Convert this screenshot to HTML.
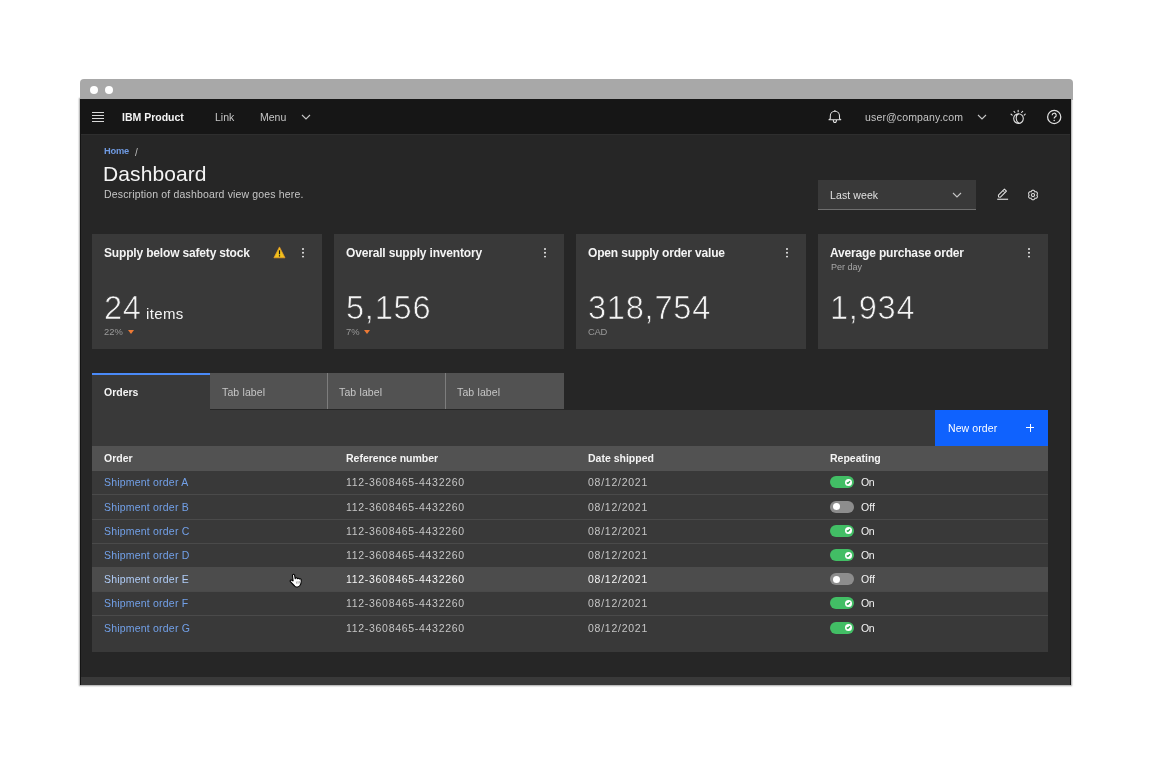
<!DOCTYPE html>
<html><head><meta charset="utf-8"><style>
html,body{margin:0;padding:0;background:#fff;}
body{width:1152px;height:767px;position:relative;overflow:hidden;font-family:"Liberation Sans",sans-serif;}
.t{position:absolute;white-space:nowrap;line-height:1;will-change:transform;}
.r{position:absolute;}
svg.r{overflow:visible;}
</style></head><body>
<div class="r" style="left:80px;top:99px;width:991px;height:586px;background:#141414;box-shadow:0 0 1.5px 0.6px rgba(0,0,0,.35);"></div>
<div class="r" style="left:79.5px;top:79px;width:993px;height:21px;background:#a8a8a8;border-radius:4px 4px 0 0;"></div>
<div class="r" style="left:90.2px;top:86px;width:8px;height:8px;background:#fff;border-radius:50%;"></div>
<div class="r" style="left:105.2px;top:86px;width:8px;height:8px;background:#fff;border-radius:50%;"></div>
<div class="r" style="left:80px;top:99px;width:991px;height:586px;background:#141414;"></div>
<div class="r" style="left:81px;top:99px;width:989px;height:585px;background:#262626;"></div>
<div class="r" style="left:81px;top:677px;width:989px;height:7.5px;background:#393939;"></div>
<div class="r" style="left:81px;top:99px;width:989px;height:35px;background:#161616;"></div>
<div class="r" style="left:81px;top:134px;width:989px;height:1px;background:#2e2e2e;"></div>
<div class="r" style="left:92px;top:112.3px;width:11.5px;height:1.0px;background:#d8d8d8;"></div>
<div class="r" style="left:92px;top:115.3px;width:11.5px;height:1.0px;background:#d8d8d8;"></div>
<div class="r" style="left:92px;top:118.3px;width:11.5px;height:1.0px;background:#d8d8d8;"></div>
<div class="r" style="left:92px;top:121.3px;width:11.5px;height:1.0px;background:#d8d8d8;"></div>
<div class="t" style="left:121.80px;top:112.11px;font-size:10.5px;color:#f4f4f4;font-weight:700;letter-spacing:0px;">IBM Product</div>
<div class="t" style="left:215.00px;top:112.11px;font-size:10.5px;color:#c6c6c6;font-weight:400;letter-spacing:0px;">Link</div>
<div class="t" style="left:260.30px;top:112.11px;font-size:10.5px;color:#c6c6c6;font-weight:400;letter-spacing:0px;">Menu</div>
<svg class="r" style="left:300.6px;top:114px" width="10" height="6.0" viewBox="-1 -1 10 6.0"><polyline points="0,0 4.0,4.0 8,0" fill="none" stroke="#c6c6c6" stroke-width="1.1"/></svg>
<svg class="r" style="left:826px;top:108px" width="18" height="18" viewBox="0 0 18 18">
<g fill="none" stroke="#e0e0e0" stroke-width="1.05" stroke-linejoin="round">
<path d="M8.9 1.9 V3.2"/>
<path d="M4.3 10.6 V7.9 A4.6 4.6 0 0 1 13.5 7.9 V10.6 L14.8 11.7 H3 Z"/>
<path d="M7.3 11.9 A1.6 2.6 0 0 0 10.5 11.9"/>
</g></svg>
<div class="t" style="left:865.10px;top:111.71px;font-size:10.5px;color:#c6c6c6;font-weight:400;letter-spacing:0.15px;">user@company.com</div>
<svg class="r" style="left:977px;top:114px" width="10" height="6.0" viewBox="-1 -1 10 6.0"><polyline points="0,0 4.0,4.0 8,0" fill="none" stroke="#c6c6c6" stroke-width="1.1"/></svg>
<svg class="r" style="left:1005px;top:105px" width="25" height="25" viewBox="0 0 25 25">
<g stroke="#e0e0e0" stroke-width="1.1" fill="none" stroke-linecap="round">
<path d="M6.1 9.2 L7.2 10.1 M9.0 6.4 L9.9 7.5 M13.15 5.2 V6.8 M17.6 6.4 L16.6 7.5 M20.2 9.2 L19.2 10.1"/>
<circle cx="13.5" cy="13.6" r="4.8"/>
<path d="M13.4 8.9 C10.4 9.9 10.4 16.4 13.8 18.3"/>
</g></svg>
<svg class="r" style="left:1046px;top:109px" width="16" height="16" viewBox="0 0 16 16">
<circle cx="8.2" cy="8" r="6.6" fill="none" stroke="#e0e0e0" stroke-width="1.25"/>
<path d="M6.2 6.3 A2 2 0 1 1 8.9 8.1 C8.3 8.4 8.2 8.8 8.2 9.6" fill="none" stroke="#e0e0e0" stroke-width="1.2"/>
<circle cx="8.2" cy="11.4" r="0.75" fill="#e0e0e0"/>
</svg>
<div class="t" style="left:103.60px;top:147.03px;font-size:9.3px;color:#6f9ae2;font-weight:700;letter-spacing:-0.25px;">Home</div>
<div class="t" style="left:135.30px;top:147.53px;font-size:10px;color:#bdbdbd;font-weight:400;letter-spacing:0px;">/</div>
<div class="t" style="left:103.30px;top:163.22px;font-size:21px;color:#f4f4f4;font-weight:400;letter-spacing:0.1px;">Dashboard</div>
<div class="t" style="left:104.00px;top:189.31px;font-size:10.5px;color:#c6c6c6;font-weight:400;letter-spacing:0.16px;">Description of dashboard view goes here.</div>
<div class="r" style="left:818px;top:180px;width:157.5px;height:29px;background:#393939;border-bottom:1px solid #6f6f6f;"></div>
<div class="t" style="left:830.40px;top:190.31px;font-size:10.5px;color:#e0e0e0;font-weight:400;letter-spacing:0.1px;">Last week</div>
<svg class="r" style="left:952.3px;top:191.7px" width="10" height="6.0" viewBox="-1 -1 10 6.0"><polyline points="0,0 4.0,4.0 8,0" fill="none" stroke="#c6c6c6" stroke-width="1.1"/></svg>
<svg class="r" style="left:990px;top:183px" width="22" height="22" viewBox="0 0 22 22">
<g fill="none" stroke="#e0e0e0" stroke-width="1.05" stroke-linejoin="round">
<g transform="translate(12.4,10.2) rotate(-45)"><path d="M-4.2 -1.45 H4.3 V1.45 H-4.2 L-5.4 0 Z"/><path d="M2.2 -1.4 V1.4" stroke-width="0.8"/></g>
<path d="M7.2 16.3 H18.1" stroke-width="1.3" stroke="#c6c6c6"/>
</g></svg>
<svg class="r" style="left:1023px;top:184.7px" width="20" height="20" viewBox="0 0 20 20">
<g fill="none" stroke="#e0e0e0" stroke-width="1.05">
<path d="M10.00 14.80 L9.83 14.79 L9.67 14.77 L9.50 14.73 L9.34 14.67 L9.19 14.60 L9.04 14.52 L8.90 14.42 L8.76 14.31 L8.64 14.19 L8.52 14.05 L8.42 13.91 L8.33 13.76 L8.24 13.60 L8.17 13.43 L8.12 13.25 L7.94 13.30 L7.76 13.32 L7.58 13.33 L7.40 13.32 L7.23 13.30 L7.06 13.27 L6.89 13.22 L6.72 13.16 L6.57 13.09 L6.42 13.00 L6.28 12.90 L6.15 12.79 L6.04 12.67 L5.93 12.54 L5.84 12.40 L5.77 12.25 L5.70 12.10 L5.66 11.93 L5.63 11.77 L5.61 11.60 L5.61 11.43 L5.62 11.26 L5.65 11.08 L5.70 10.91 L5.75 10.75 L5.82 10.59 L5.91 10.43 L6.00 10.28 L6.11 10.14 L6.25 10.00 L6.11 9.86 L6.00 9.72 L5.91 9.57 L5.82 9.41 L5.75 9.25 L5.70 9.09 L5.65 8.92 L5.62 8.74 L5.61 8.57 L5.61 8.40 L5.63 8.23 L5.66 8.07 L5.70 7.90 L5.77 7.75 L5.84 7.60 L5.93 7.46 L6.04 7.33 L6.15 7.21 L6.28 7.10 L6.42 7.00 L6.57 6.91 L6.72 6.84 L6.89 6.78 L7.06 6.73 L7.23 6.70 L7.40 6.68 L7.58 6.67 L7.76 6.68 L7.94 6.70 L8.12 6.75 L8.17 6.57 L8.24 6.40 L8.33 6.24 L8.42 6.09 L8.52 5.95 L8.64 5.81 L8.76 5.69 L8.90 5.58 L9.04 5.48 L9.19 5.40 L9.34 5.33 L9.50 5.27 L9.67 5.23 L9.83 5.21 L10.00 5.20 L10.17 5.21 L10.33 5.23 L10.50 5.27 L10.66 5.33 L10.81 5.40 L10.96 5.48 L11.10 5.58 L11.24 5.69 L11.36 5.81 L11.48 5.95 L11.58 6.09 L11.67 6.24 L11.76 6.40 L11.83 6.57 L11.88 6.75 L12.06 6.70 L12.24 6.68 L12.42 6.67 L12.60 6.68 L12.77 6.70 L12.94 6.73 L13.11 6.78 L13.28 6.84 L13.43 6.91 L13.58 7.00 L13.72 7.10 L13.85 7.21 L13.96 7.33 L14.07 7.46 L14.16 7.60 L14.23 7.75 L14.30 7.90 L14.34 8.07 L14.37 8.23 L14.39 8.40 L14.39 8.57 L14.38 8.74 L14.35 8.92 L14.30 9.09 L14.25 9.25 L14.18 9.41 L14.09 9.57 L14.00 9.72 L13.89 9.86 L13.75 10.00 L13.89 10.14 L14.00 10.28 L14.09 10.43 L14.18 10.59 L14.25 10.75 L14.30 10.91 L14.35 11.08 L14.38 11.26 L14.39 11.43 L14.39 11.60 L14.37 11.77 L14.34 11.93 L14.30 12.10 L14.23 12.25 L14.16 12.40 L14.07 12.54 L13.96 12.67 L13.85 12.79 L13.72 12.90 L13.58 13.00 L13.43 13.09 L13.28 13.16 L13.11 13.22 L12.94 13.27 L12.77 13.30 L12.60 13.32 L12.42 13.33 L12.24 13.32 L12.06 13.30 L11.88 13.25 L11.83 13.43 L11.76 13.60 L11.67 13.76 L11.58 13.91 L11.48 14.05 L11.36 14.19 L11.24 14.31 L11.10 14.42 L10.96 14.52 L10.81 14.60 L10.66 14.67 L10.50 14.73 L10.33 14.77 L10.17 14.79 L10.00 14.80 Z"/>
<circle cx="10" cy="10" r="1.6"/>
</g></svg>
<div class="r" style="left:92px;top:234px;width:230px;height:115px;background:#393939;"></div>
<div class="t" style="left:104.20px;top:247.04px;font-size:12px;color:#f4f4f4;font-weight:700;letter-spacing:-0.17px;">Supply below safety stock</div>
<svg class="r" style="left:300.1px;top:245.7px" width="6" height="14" viewBox="0 0 6 14"><circle cx="3" cy="3" r="0.95" fill="#f4f4f4"/><circle cx="3" cy="6.8" r="0.95" fill="#f4f4f4"/><circle cx="3" cy="10.6" r="0.95" fill="#f4f4f4"/></svg>
<div class="t" style="left:104.30px;top:291.50px;font-size:32.6px;color:#f4f4f4;font-weight:300;letter-spacing:0.75px;-webkit-text-stroke:0.7px #393939;">24</div>
<div class="t" style="left:104.00px;top:327.34px;font-size:9.4px;color:#9a9a9a;font-weight:400;letter-spacing:0px;">22%</div>
<svg class="r" style="left:127.7px;top:329.5px" width="6" height="4" viewBox="0 0 6 4"><path d="M0 0 H6 L3 4 Z" fill="#ee7a35"/></svg>
<div class="r" style="left:334px;top:234px;width:230px;height:115px;background:#393939;"></div>
<div class="t" style="left:346.20px;top:247.04px;font-size:12px;color:#f4f4f4;font-weight:700;letter-spacing:-0.17px;">Overall supply inventory</div>
<svg class="r" style="left:542.1px;top:245.7px" width="6" height="14" viewBox="0 0 6 14"><circle cx="3" cy="3" r="0.95" fill="#f4f4f4"/><circle cx="3" cy="6.8" r="0.95" fill="#f4f4f4"/><circle cx="3" cy="10.6" r="0.95" fill="#f4f4f4"/></svg>
<div class="t" style="left:346.30px;top:291.50px;font-size:32.6px;color:#f4f4f4;font-weight:300;letter-spacing:0.75px;-webkit-text-stroke:0.7px #393939;">5,156</div>
<div class="t" style="left:346.00px;top:327.34px;font-size:9.4px;color:#9a9a9a;font-weight:400;letter-spacing:0px;">7%</div>
<svg class="r" style="left:364.3px;top:329.5px" width="6" height="4" viewBox="0 0 6 4"><path d="M0 0 H6 L3 4 Z" fill="#ee7a35"/></svg>
<div class="r" style="left:576px;top:234px;width:230px;height:115px;background:#393939;"></div>
<div class="t" style="left:588.20px;top:247.04px;font-size:12px;color:#f4f4f4;font-weight:700;letter-spacing:-0.17px;">Open supply order value</div>
<svg class="r" style="left:784.1px;top:245.7px" width="6" height="14" viewBox="0 0 6 14"><circle cx="3" cy="3" r="0.95" fill="#f4f4f4"/><circle cx="3" cy="6.8" r="0.95" fill="#f4f4f4"/><circle cx="3" cy="10.6" r="0.95" fill="#f4f4f4"/></svg>
<div class="t" style="left:588.30px;top:291.50px;font-size:32.6px;color:#f4f4f4;font-weight:300;letter-spacing:0.75px;-webkit-text-stroke:0.7px #393939;">318,754</div>
<div class="t" style="left:588.00px;top:327.34px;font-size:9.4px;color:#9a9a9a;font-weight:400;letter-spacing:-0.3px;">CAD</div>
<div class="r" style="left:818px;top:234px;width:230px;height:115px;background:#393939;"></div>
<div class="t" style="left:830.20px;top:247.04px;font-size:12px;color:#f4f4f4;font-weight:700;letter-spacing:-0.17px;">Average purchase order</div>
<svg class="r" style="left:1026.1px;top:245.7px" width="6" height="14" viewBox="0 0 6 14"><circle cx="3" cy="3" r="0.95" fill="#f4f4f4"/><circle cx="3" cy="6.8" r="0.95" fill="#f4f4f4"/><circle cx="3" cy="10.6" r="0.95" fill="#f4f4f4"/></svg>
<div class="t" style="left:830.30px;top:291.50px;font-size:32.6px;color:#f4f4f4;font-weight:300;letter-spacing:0.75px;-webkit-text-stroke:0.7px #393939;">1,934</div>
<div class="t" style="left:145.60px;top:306.10px;font-size:15px;color:#f4f4f4;font-weight:400;letter-spacing:0.35px;">items</div>
<div class="t" style="left:830.70px;top:262.98px;font-size:9px;color:#a8a8a8;font-weight:400;letter-spacing:0px;">Per day</div>
<svg class="r" style="left:273px;top:246px" width="13" height="13" viewBox="0 0 13 13">
<path d="M6.45 0.9 L12 11.8 H0.9 Z" fill="#f1c21b" stroke="#ec9a2a" stroke-width="0.7" stroke-linejoin="round"/>
<rect x="5.9" y="4.3" width="1.2" height="4" fill="#161616"/>
<rect x="5.9" y="9.2" width="1.2" height="1.3" fill="#161616"/>
</svg>
<div class="r" style="left:92px;top:373.3px;width:118px;height:37px;background:#393939;"></div>
<div class="r" style="left:92px;top:373.3px;width:118px;height:1.8px;background:#4a8af8;"></div>
<div class="t" style="left:104.10px;top:386.91px;font-size:10.5px;color:#f4f4f4;font-weight:700;letter-spacing:0px;">Orders</div>
<div class="r" style="left:210px;top:373.3px;width:117px;height:36.2px;background:#525252;"></div>
<div class="t" style="left:222.40px;top:386.91px;font-size:10.5px;color:#c6c6c6;font-weight:400;letter-spacing:0.14px;">Tab label</div>
<div class="r" style="left:327px;top:373.3px;width:118px;height:36.2px;background:#525252;"></div>
<div class="r" style="left:327px;top:373.3px;width:1px;height:36.2px;background:#7d7d7d;"></div>
<div class="t" style="left:339.40px;top:386.91px;font-size:10.5px;color:#c6c6c6;font-weight:400;letter-spacing:0.14px;">Tab label</div>
<div class="r" style="left:445px;top:373.3px;width:119px;height:36.2px;background:#525252;"></div>
<div class="r" style="left:445px;top:373.3px;width:1px;height:36.2px;background:#7d7d7d;"></div>
<div class="t" style="left:457.40px;top:386.91px;font-size:10.5px;color:#c6c6c6;font-weight:400;letter-spacing:0.14px;">Tab label</div>
<div class="r" style="left:92px;top:409.5px;width:956px;height:242.5px;background:#393939;"></div>
<div class="r" style="left:935.3px;top:409.5px;width:112.7px;height:36.5px;background:#0f62fe;"></div>
<div class="t" style="left:947.80px;top:423.11px;font-size:10.5px;color:#ffffff;font-weight:400;letter-spacing:0.1px;">New order</div>
<div class="r" style="left:1026.2px;top:427.3px;width:7.5px;height:0.95px;background:#fff;"></div>
<div class="r" style="left:1029.5px;top:424px;width:0.95px;height:7.5px;background:#fff;"></div>
<div class="r" style="left:92px;top:446px;width:956px;height:24.8px;background:#525252;"></div>
<div class="t" style="left:103.80px;top:452.91px;font-size:10.5px;color:#f4f4f4;font-weight:700;letter-spacing:0px;">Order</div>
<div class="t" style="left:345.80px;top:452.91px;font-size:10.5px;color:#f4f4f4;font-weight:700;letter-spacing:0px;">Reference number</div>
<div class="t" style="left:587.80px;top:452.91px;font-size:10.5px;color:#f4f4f4;font-weight:700;letter-spacing:0px;">Date shipped</div>
<div class="t" style="left:829.80px;top:452.91px;font-size:10.5px;color:#f4f4f4;font-weight:700;letter-spacing:0px;">Repeating</div>
<div class="r" style="left:92px;top:494.40000000000003px;width:956px;height:1px;background:#4a4a4a;"></div>
<div class="t" style="left:103.90px;top:477.41px;font-size:10.5px;color:#72a0e8;font-weight:400;letter-spacing:0.2px;">Shipment order A</div>
<div class="t" style="left:346.00px;top:477.41px;font-size:10.5px;color:#c6c6c6;font-weight:400;letter-spacing:0.7px;">112-3608465-4432260</div>
<div class="t" style="left:588.00px;top:477.41px;font-size:10.5px;color:#c6c6c6;font-weight:400;letter-spacing:0.75px;">08/12/2021</div>
<div class="r" style="left:830px;top:476.3px;width:24.2px;height:12px;background:#42be65;border-radius:6px;"></div>
<div class="r" style="left:845px;top:478.90000000000003px;width:7px;height:7px;background:#fff;border-radius:50%;"></div>
<svg class="r" style="left:846px;top:479.90000000000003px" width="5" height="5" viewBox="0 0 5 5"><path d="M0.8 2.4 L1.9 3.4 L4 1.2" fill="none" stroke="#24a148" stroke-width="1.3"/></svg>
<div class="t" style="left:861.00px;top:477.41px;font-size:10.5px;color:#f4f4f4;font-weight:400;letter-spacing:-0.4px;">On</div>
<div class="r" style="left:92px;top:518.6px;width:956px;height:1px;background:#4a4a4a;"></div>
<div class="t" style="left:103.90px;top:501.61px;font-size:10.5px;color:#72a0e8;font-weight:400;letter-spacing:0.2px;">Shipment order B</div>
<div class="t" style="left:346.00px;top:501.61px;font-size:10.5px;color:#c6c6c6;font-weight:400;letter-spacing:0.7px;">112-3608465-4432260</div>
<div class="t" style="left:588.00px;top:501.61px;font-size:10.5px;color:#c6c6c6;font-weight:400;letter-spacing:0.75px;">08/12/2021</div>
<div class="r" style="left:830px;top:500.5px;width:24.2px;height:12px;background:#8d8d8d;border-radius:6px;"></div>
<div class="r" style="left:832.8px;top:503.1px;width:7px;height:7px;background:#fff;border-radius:50%;"></div>
<div class="t" style="left:861.00px;top:501.61px;font-size:10.5px;color:#f4f4f4;font-weight:400;letter-spacing:0px;">Off</div>
<div class="r" style="left:92px;top:542.8000000000001px;width:956px;height:1px;background:#4a4a4a;"></div>
<div class="t" style="left:103.90px;top:525.81px;font-size:10.5px;color:#72a0e8;font-weight:400;letter-spacing:0.2px;">Shipment order C</div>
<div class="t" style="left:346.00px;top:525.81px;font-size:10.5px;color:#c6c6c6;font-weight:400;letter-spacing:0.7px;">112-3608465-4432260</div>
<div class="t" style="left:588.00px;top:525.81px;font-size:10.5px;color:#c6c6c6;font-weight:400;letter-spacing:0.75px;">08/12/2021</div>
<div class="r" style="left:830px;top:524.7px;width:24.2px;height:12px;background:#42be65;border-radius:6px;"></div>
<div class="r" style="left:845px;top:527.3000000000001px;width:7px;height:7px;background:#fff;border-radius:50%;"></div>
<svg class="r" style="left:846px;top:528.3000000000001px" width="5" height="5" viewBox="0 0 5 5"><path d="M0.8 2.4 L1.9 3.4 L4 1.2" fill="none" stroke="#24a148" stroke-width="1.3"/></svg>
<div class="t" style="left:861.00px;top:525.81px;font-size:10.5px;color:#f4f4f4;font-weight:400;letter-spacing:-0.4px;">On</div>
<div class="r" style="left:92px;top:567.0px;width:956px;height:1px;background:#4a4a4a;"></div>
<div class="t" style="left:103.90px;top:550.01px;font-size:10.5px;color:#72a0e8;font-weight:400;letter-spacing:0.2px;">Shipment order D</div>
<div class="t" style="left:346.00px;top:550.01px;font-size:10.5px;color:#c6c6c6;font-weight:400;letter-spacing:0.7px;">112-3608465-4432260</div>
<div class="t" style="left:588.00px;top:550.01px;font-size:10.5px;color:#c6c6c6;font-weight:400;letter-spacing:0.75px;">08/12/2021</div>
<div class="r" style="left:830px;top:548.9px;width:24.2px;height:12px;background:#42be65;border-radius:6px;"></div>
<div class="r" style="left:845px;top:551.5px;width:7px;height:7px;background:#fff;border-radius:50%;"></div>
<svg class="r" style="left:846px;top:552.5px" width="5" height="5" viewBox="0 0 5 5"><path d="M0.8 2.4 L1.9 3.4 L4 1.2" fill="none" stroke="#24a148" stroke-width="1.3"/></svg>
<div class="t" style="left:861.00px;top:550.01px;font-size:10.5px;color:#f4f4f4;font-weight:400;letter-spacing:-0.4px;">On</div>
<div class="r" style="left:92px;top:567.0px;width:956px;height:24.6px;background:#4c4c4c;"></div>
<div class="r" style="left:92px;top:591.2px;width:956px;height:1px;background:#4a4a4a;"></div>
<div class="t" style="left:103.90px;top:574.21px;font-size:10.5px;color:#b0cdf8;font-weight:400;letter-spacing:0.2px;">Shipment order E</div>
<div class="t" style="left:346.00px;top:574.21px;font-size:10.5px;color:#f4f4f4;font-weight:400;letter-spacing:0.7px;">112-3608465-4432260</div>
<div class="t" style="left:588.00px;top:574.21px;font-size:10.5px;color:#f4f4f4;font-weight:400;letter-spacing:0.75px;">08/12/2021</div>
<div class="r" style="left:830px;top:573.1px;width:24.2px;height:12px;background:#8d8d8d;border-radius:6px;"></div>
<div class="r" style="left:832.8px;top:575.7px;width:7px;height:7px;background:#fff;border-radius:50%;"></div>
<div class="t" style="left:861.00px;top:574.21px;font-size:10.5px;color:#f4f4f4;font-weight:400;letter-spacing:0px;">Off</div>
<div class="r" style="left:92px;top:615.4px;width:956px;height:1px;background:#4a4a4a;"></div>
<div class="t" style="left:103.90px;top:598.41px;font-size:10.5px;color:#72a0e8;font-weight:400;letter-spacing:0.2px;">Shipment order F</div>
<div class="t" style="left:346.00px;top:598.41px;font-size:10.5px;color:#c6c6c6;font-weight:400;letter-spacing:0.7px;">112-3608465-4432260</div>
<div class="t" style="left:588.00px;top:598.41px;font-size:10.5px;color:#c6c6c6;font-weight:400;letter-spacing:0.75px;">08/12/2021</div>
<div class="r" style="left:830px;top:597.3px;width:24.2px;height:12px;background:#42be65;border-radius:6px;"></div>
<div class="r" style="left:845px;top:599.9px;width:7px;height:7px;background:#fff;border-radius:50%;"></div>
<svg class="r" style="left:846px;top:600.9px" width="5" height="5" viewBox="0 0 5 5"><path d="M0.8 2.4 L1.9 3.4 L4 1.2" fill="none" stroke="#24a148" stroke-width="1.3"/></svg>
<div class="t" style="left:861.00px;top:598.41px;font-size:10.5px;color:#f4f4f4;font-weight:400;letter-spacing:-0.4px;">On</div>
<div class="t" style="left:103.90px;top:622.61px;font-size:10.5px;color:#72a0e8;font-weight:400;letter-spacing:0.2px;">Shipment order G</div>
<div class="t" style="left:346.00px;top:622.61px;font-size:10.5px;color:#c6c6c6;font-weight:400;letter-spacing:0.7px;">112-3608465-4432260</div>
<div class="t" style="left:588.00px;top:622.61px;font-size:10.5px;color:#c6c6c6;font-weight:400;letter-spacing:0.75px;">08/12/2021</div>
<div class="r" style="left:830px;top:621.5px;width:24.2px;height:12px;background:#42be65;border-radius:6px;"></div>
<div class="r" style="left:845px;top:624.1px;width:7px;height:7px;background:#fff;border-radius:50%;"></div>
<svg class="r" style="left:846px;top:625.1px" width="5" height="5" viewBox="0 0 5 5"><path d="M0.8 2.4 L1.9 3.4 L4 1.2" fill="none" stroke="#24a148" stroke-width="1.3"/></svg>
<div class="t" style="left:861.00px;top:622.61px;font-size:10.5px;color:#f4f4f4;font-weight:400;letter-spacing:-0.4px;">On</div>
<svg class="r" style="left:280px;top:565px" width="30" height="30" viewBox="0 0 30 30">
<path d="M13.1 9.5 C13.8 9.1 14.5 9.4 14.6 10.1 L15.2 13.6 L15.6 13 C16.1 12.5 16.9 12.7 17.2 13.3 L17.5 13.6 C17.9 13 18.8 13.1 19.1 13.7 L19.4 14 C19.9 13.5 20.9 13.8 21.1 14.5 C21.4 15.6 21.3 17.4 20.8 18.8 C20.3 20.4 19.4 21.7 17.6 22 C16.3 22.2 15.3 21.8 14.6 21 L10.4 16.6 C9.7 15.9 10.4 14.8 11.3 15.1 L13.1 15.9 L12.5 10.7 C12.4 10.1 12.6 9.7 13.1 9.5 Z" fill="#fff" stroke="#000" stroke-width="1.1" stroke-linejoin="round"/>
<path d="M16.3 16.5 L16.8 18.8 M17.8 16.2 L18.2 18.6 M19.2 16 L19.5 18.3" stroke="#777" stroke-width="0.6"/>
</svg>
</body></html>
